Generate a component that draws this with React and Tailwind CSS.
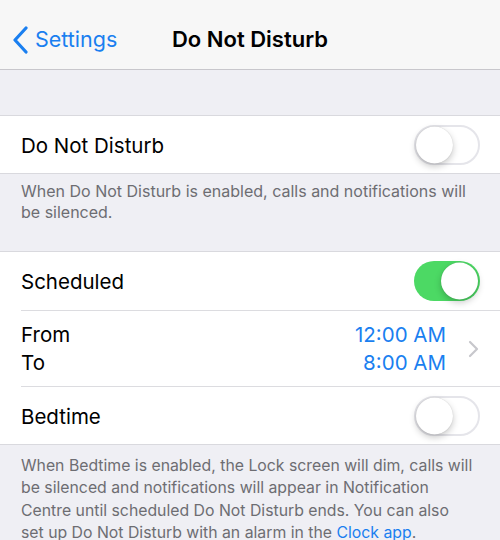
import React from "react";

function Toggle({ on }) {
  return (
    <div
      className={
        "relative w-[66px] h-[40px] rounded-full " +
        (on ? "bg-[#4cd964]" : "bg-white border-[2px] border-[#e5e5ea]")
      }
    >
      <div
        className={
          "absolute top-1/2 -translate-y-1/2 w-[37px] h-[37px] rounded-full bg-white shadow-[0_3px_7px_rgba(0,0,0,0.22),0_0_1px_rgba(0,0,0,0.2)] " +
          (on ? "right-[2px]" : "left-0")
        }
      />
    </div>
  );
}

export default function App() {
  return (
    <div
      className="w-[500px] h-[540px] overflow-hidden bg-[#efeff4] text-black"
      style={{ fontFamily: "Inter, 'Noto Sans', sans-serif" }}
    >
      {/* navigation bar */}
      <div className="relative h-[70px] pt-[10px] bg-[#f7f7f7] border-b border-[#c8c7cc] flex items-center justify-center">
        <div className="absolute left-[12px] top-[10px] bottom-0 flex items-center gap-[6px] text-[#1a7ff0]">
          <svg width="17" height="28" viewBox="0 0 17 28" fill="none">
            <path d="M14 2 L3 14 L14 26" stroke="#1a7ff0" strokeWidth="3.2" strokeLinecap="round" strokeLinejoin="round" />
          </svg>
          <span className="text-[21.5px]">Settings</span>
        </div>
        <span className="text-[22px] font-semibold">Do Not Disturb</span>
      </div>

      <div className="h-[45px]" />

      {/* first group */}
      <div className="bg-white border-y border-[#d9d9de]">
        <div className="h-[57px] pl-[21px] pr-[20px] flex items-center justify-between">
          <span className="pt-[3px] text-[20.5px]">Do Not Disturb</span>
          <Toggle on={false} />
        </div>
      </div>
      <div className="pl-[21px] pr-[22px] pt-[7px] pb-[28px] text-[16px] leading-[21px] text-[#6d6d72]">
        When Do Not Disturb is enabled, calls and notifications will be silenced.
      </div>

      {/* schedule group */}
      <div className="bg-white border-y border-[#d9d9de]">
        <div className="h-[58px] pl-[21px] pr-[20px] flex items-center justify-between">
          <span className="pt-[3px] text-[20.5px]">Scheduled</span>
          <Toggle on={true} />
        </div>
        <div className="ml-[21px] border-t border-[#dcdce0]" />
        <div className="h-[75px] pl-[21px] pr-[20px] flex items-center">
          <div className="flex-1 flex flex-col text-[20.5px] leading-[28px]">
            <span>From</span>
            <span>To</span>
          </div>
          <div className="flex flex-col items-end text-[20.5px] leading-[28px] text-[#1a7ff0]">
            <span>12:00 AM</span>
            <span>8:00 AM</span>
          </div>
          <svg className="ml-[22px]" width="12" height="18" viewBox="0 0 12 18" fill="none">
            <path d="M2 2 L9 9 L2 16" stroke="#c7c7cc" strokeWidth="2.2" strokeLinecap="round" strokeLinejoin="round" />
          </svg>
        </div>
        <div className="ml-[21px] border-t border-[#dcdce0]" />
        <div className="h-[57px] pl-[21px] pr-[20px] flex items-center justify-between">
          <span className="pt-[3px] text-[20.5px]">Bedtime</span>
          <Toggle on={false} />
        </div>
      </div>
      <div className="pl-[21px] pt-[10px] text-[15.8px] leading-[22.3px] text-[#6d6d72] whitespace-nowrap">
        When Bedtime is enabled, the Lock screen will dim, calls will
        <br />
        be silenced and notifications will appear in Notification
        <br />
        Centre until scheduled Do Not Disturb ends. You can also
        <br />
        set up Do Not Disturb with an alarm in the{" "}
        <span className="text-[#1a7ff0]">Clock app</span>.
      </div>
    </div>
  );
}
